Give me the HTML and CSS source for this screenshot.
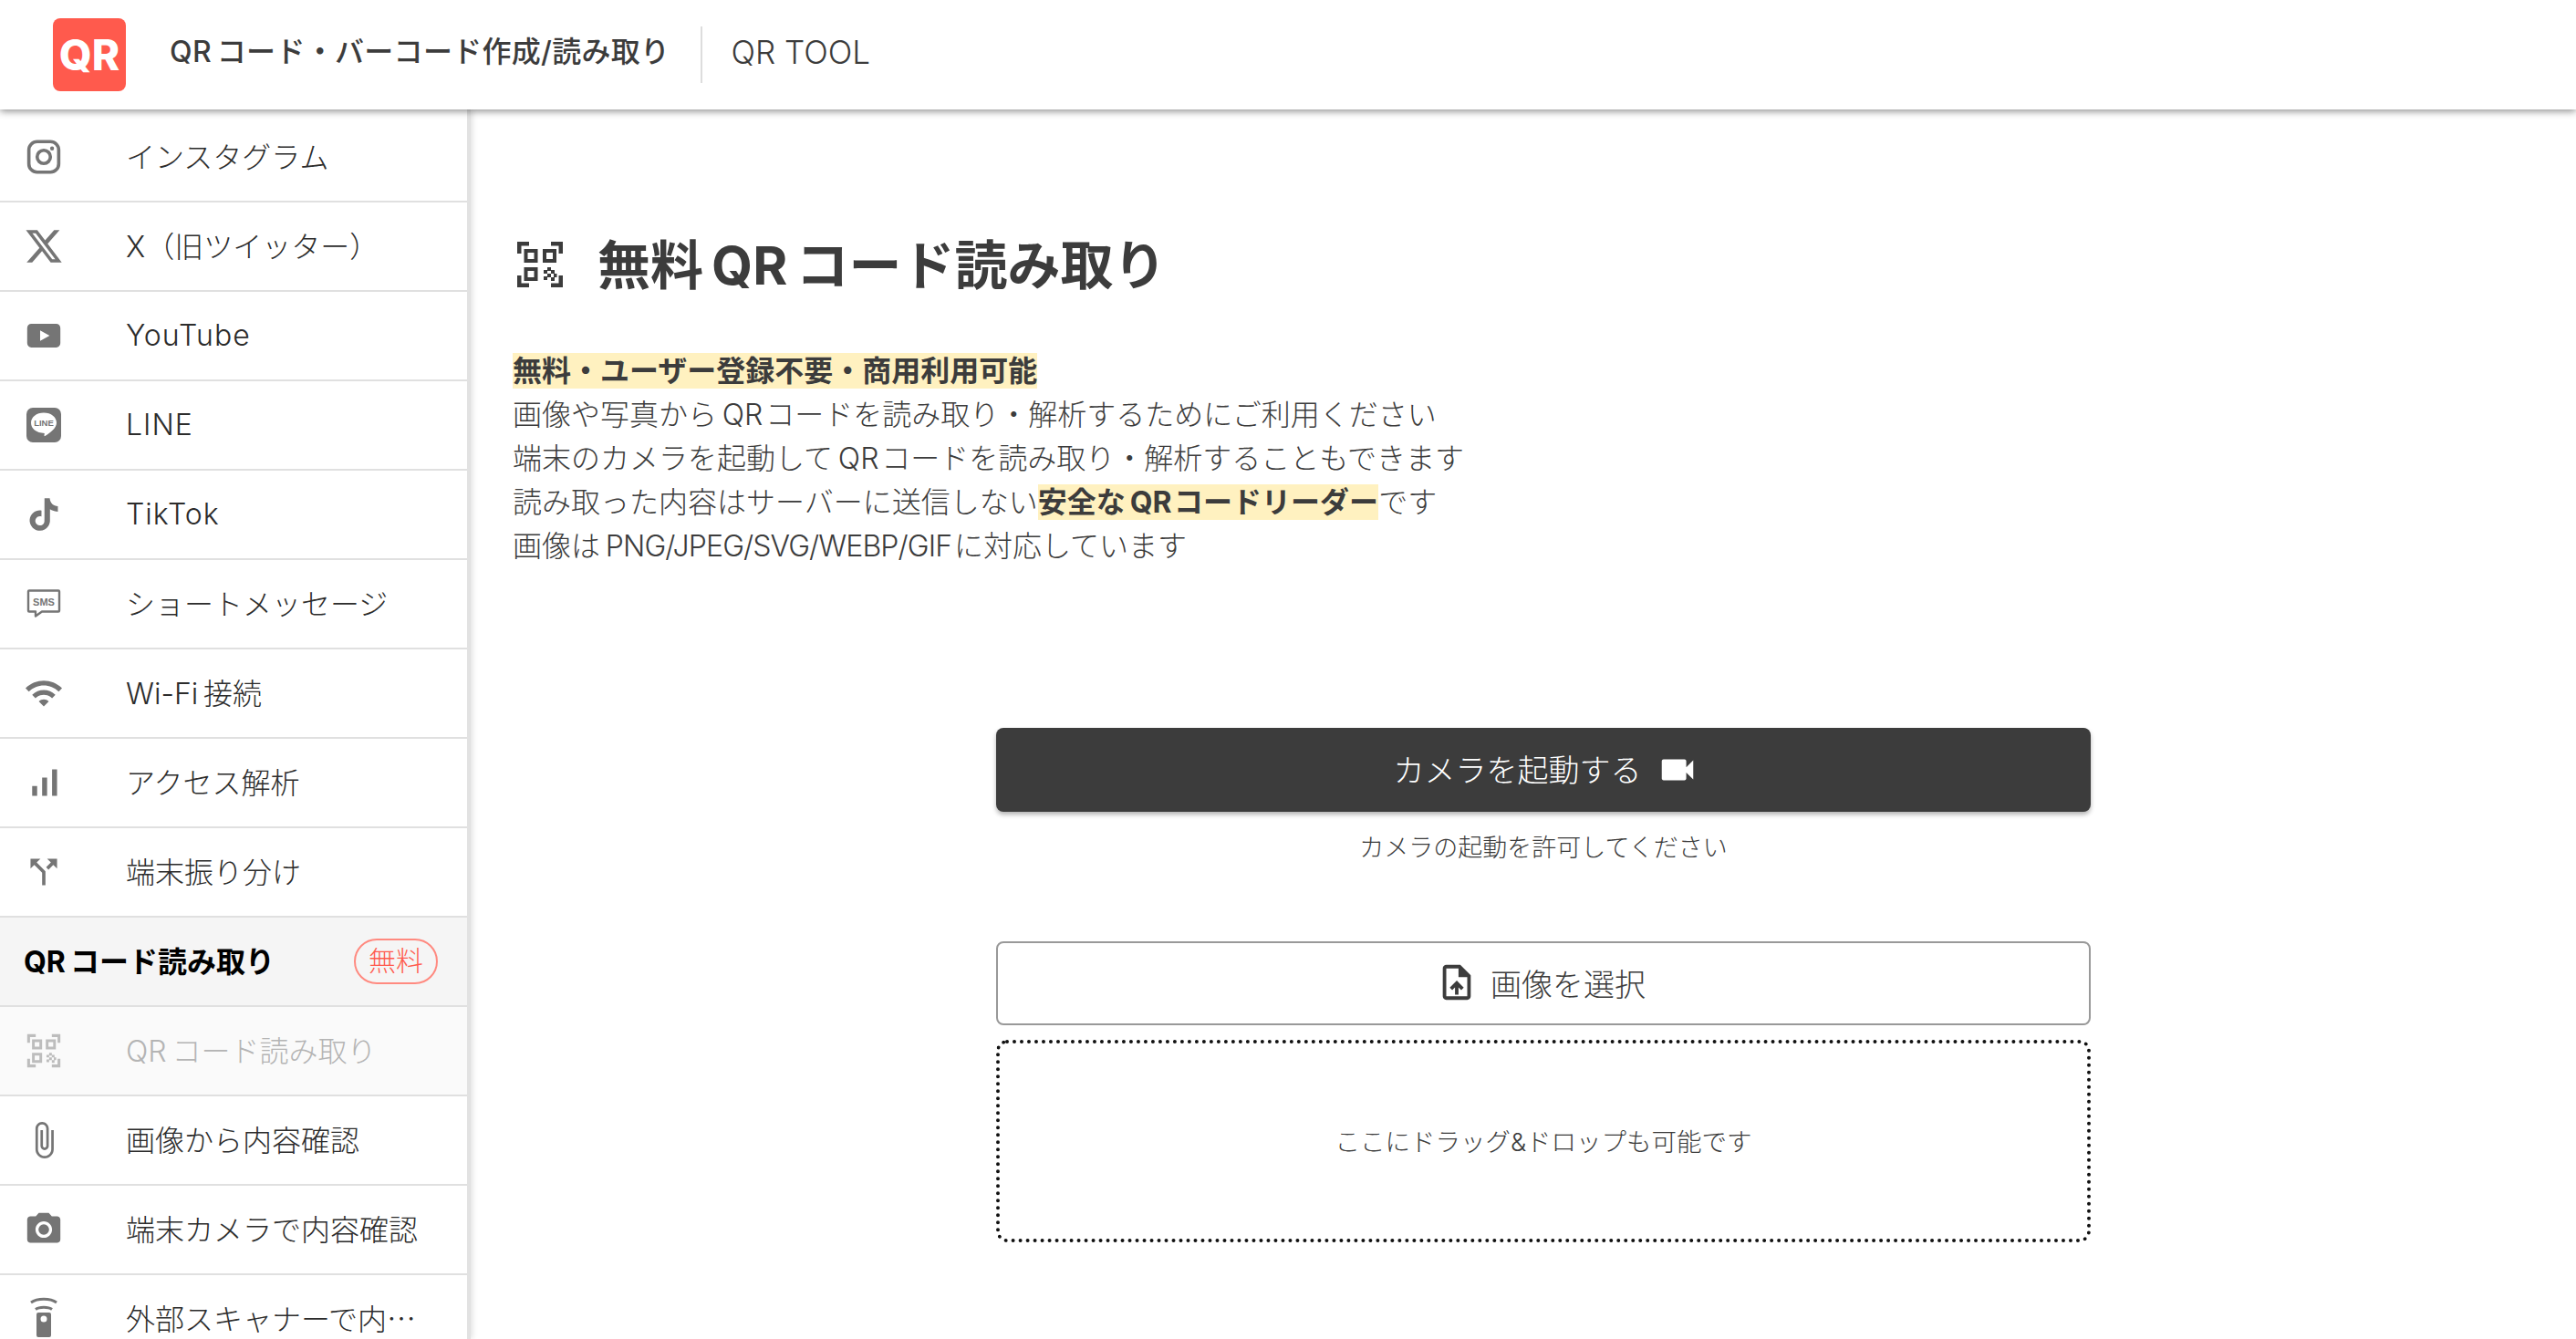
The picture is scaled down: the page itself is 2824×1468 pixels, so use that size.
FILE: index.html
```html
<!DOCTYPE html>
<html lang="ja">
<head>
  <meta charset="UTF-8" />
  <meta name="viewport" content="width=device-width, initial-scale=1.0" />
  <title>無料QRコード読み取り</title>
  <link rel="stylesheet" href="styles.css">
</head>
<body>
  <svg class="defs" width="0" height="0">
    <symbol id="i-qr" viewBox="0 0 50 50">
      <path d="M0 13V0h13v4.500H4.500V13zM37 0h13v13h-4.500V4.500H37zM0 37h4.500v8.500H13V50H0zM45.500 37H50v13H37v-4.500h8.500z"/>
      <path fill-rule="evenodd" d="M7.500 8h15v15h-15zm4 4v7h7v-7zM28 8h15v15H28zm4 4v7h7v-7zM7.500 28h15v15h-15zm4 4v7h7v-7z"/>
      <path d="M33 28h4v4h-4zM29 31h4v4h-4zM37 31h4v4h-4zM33 35h4v4h-4zM40 35h3.500v4H40zM29 38h4v4h-4zM37 39h4v4h-4z"/>
    </symbol>
    <symbol id="i-videocam" viewBox="0 0 24 24"><path d="M17 10.5V7c0-.55-.45-1-1-1H4c-.55 0-1 .45-1 1v10c0 .55.45 1 1 1h12c.55 0 1-.45 1-1v-3.5l4 4v-11l-4 4z"/></symbol>
    <symbol id="i-upload" viewBox="0 0 24 24"><path d="M14 2H6c-1.1 0-1.99.9-1.99 2L4 20c0 1.1.89 2 1.99 2H18c1.1 0 2-.9 2-2V8l-6-6zm4 18H6V4h7v5h5v11zM8 15.01l1.41 1.41L11 14.84V19h2v-4.16l1.59 1.59L16 15.01 12.01 11 8 15.01z"/></symbol>
  </svg>

  <header class="topbar">
    <div class="logo">QR</div>
    <div class="site-name">QR&#8201;コード・バーコード作成/読み取り</div>
    <div class="tool-name">QR TOOL</div>
  </header>

  <div class="layout">
    <aside class="sidebar">
      <a class="nav-row">
        <svg class="nav-icon" viewBox="1 1 22 22"><rect x="3" y="2.800" width="18" height="18.400" rx="5" fill="none" stroke="currentColor" stroke-width="2"/><circle cx="12" cy="12" r="4" fill="none" stroke="currentColor" stroke-width="2"/><circle cx="17" cy="6.900" r="1.200"/></svg>
        <span class="nav-label">インスタグラム</span>
      </a>
      <a class="nav-row">
        <svg class="nav-icon" viewBox="1 1 22 22"><path d="M18.244 2.25h3.308l-7.227 8.26 8.502 11.24H16.17l-5.214-6.817L4.99 21.75H1.68l7.73-8.835L1.254 2.25H8.08l4.713 6.231zm-1.161 17.52h1.833L7.084 4.126H5.117z"/></svg>
        <span class="nav-label">X（旧ツイッター）</span>
      </a>
      <a class="nav-row">
        <svg class="nav-icon" viewBox="1 1 22 22"><path fill-rule="evenodd" d="M4.5 4.9h15c1.4 0 2.5 1.1 2.5 2.5v9.200c0 1.400-1.100 2.500-2.500 2.500h-15C3.100 19.100 2 18 2 16.600V7.400c0-1.400 1.100-2.500 2.500-2.500zM9.800 8.800v6.400l5.700-3.200z"/></svg>
        <span class="nav-label nav-latin">YouTube</span>
      </a>
      <a class="nav-row">
        <svg class="nav-icon" viewBox="0 0 40 40"><rect x="1" y="1" width="38" height="38" rx="7"/><path fill="#fff" d="M20 6.500c8 0 14 4.900 14 11 0 5.500-6 10.500-12.600 14.500-.8.400-1 0-.9-.7l.3-2.300C11.500 28.500 6 23.800 6 17.500c0-6.100 6-11 14-11z"/><text class="icon-text" x="20" y="21" text-anchor="middle" font-size="9.500">LINE</text></svg>
        <span class="nav-label nav-latin">LINE</span>
      </a>
      <a class="nav-row">
        <svg class="nav-icon" viewBox="-1.500 -1.500 27 27"><path d="M12.525.02c1.31-.02 2.61-.01 3.91-.02.08 1.53.63 3.09 1.75 4.17 1.12 1.11 2.7 1.62 4.24 1.79v4.03c-1.44-.05-2.89-.35-4.2-.97-.57-.26-1.1-.59-1.62-.93-.01 2.92.01 5.84-.02 8.75-.08 1.4-.54 2.79-1.35 3.94-1.31 1.92-3.58 3.17-5.91 3.21-1.43.08-2.86-.31-4.08-1.03-2.02-1.19-3.44-3.37-3.65-5.71-.02-.5-.03-1-.01-1.49.18-1.9 1.12-3.72 2.58-4.96 1.66-1.44 3.98-2.13 6.15-1.72.02 1.48-.04 2.96-.04 4.44-.99-.32-2.15-.23-3.02.37-.63.41-1.11 1.04-1.36 1.75-.21.51-.15 1.07-.14 1.61.24 1.64 1.82 3.02 3.5 2.87 1.12-.01 2.19-.66 2.77-1.61.19-.33.4-.67.41-1.06.1-1.79.06-3.57.07-5.36.01-4.03-.01-8.05.02-12.07z"/></svg>
        <span class="nav-label nav-latin">TikTok</span>
      </a>
      <a class="nav-row">
        <svg class="nav-icon" viewBox="0 0 40 40"><path fill="none" stroke="currentColor" stroke-width="2.400" stroke-linejoin="round" d="M4 5.500h32a1 1 0 0 1 1 1v21a1 1 0 0 1-1 1H18l-7 5v-5H4a1 1 0 0 1-1-1v-21a1 1 0 0 1 1-1z"/><text class="icon-text" x="20" y="21.500" text-anchor="middle" font-size="11">SMS</text></svg>
        <span class="nav-label">ショートメッセージ</span>
      </a>
      <a class="nav-row">
        <svg class="nav-icon" viewBox="1 1 22 22"><path d="M1 9l2 2c4.970-4.970 13.030-4.970 18 0l2-2C16.930 2.930 7.080 2.930 1 9zm8 8l3 3 3-3c-1.650-1.660-4.340-1.660-6 0zm-4-4l2 2c2.760-2.760 7.240-2.760 10 0l2-2C15.140 9.140 8.870 9.140 5 13z"/></svg>
        <span class="nav-label">Wi-Fi&#8201;接続</span>
      </a>
      <a class="nav-row">
        <svg class="nav-icon" viewBox="1 1 22 22"><path d="M17 4h3v16h-3V4zM5 14h3v6H5v-6zm6-5h3v11h-3V9z"/></svg>
        <span class="nav-label">アクセス解析</span>
      </a>
      <a class="nav-row">
        <svg class="nav-icon" viewBox="1 1 22 22"><path d="M14 4l2.290 2.290-2.880 2.880 1.420 1.420 2.880-2.880L20 10V4h-6zm-4 0H4v6l2.290-2.290 4.710 4.700V20h2v-8.410l-5.290-5.300L10 4z"/></svg>
        <span class="nav-label">端末振り分け</span>
      </a>

      <div class="nav-row nav-head">
        <span class="nav-label">QR&#8201;コード読み取り</span>
        <span class="badge">無料</span>
      </div>
      <a class="nav-row nav-current">
        <svg class="nav-icon"><use href="#i-qr"/></svg>
        <span class="nav-label">QR&#8201;コード読み取り</span>
      </a>
      <a class="nav-row">
        <svg class="nav-icon" viewBox="1 1 22 22"><path d="M16.500 6v11.500c0 2.210-1.790 4-4 4s-4-1.790-4-4V5c0-1.380 1.120-2.500 2.500-2.500s2.500 1.120 2.500 2.500v10.500c0 .55-.45 1-1 1s-1-.45-1-1V6H10v9.500c0 1.380 1.120 2.500 2.500 2.500s2.500-1.120 2.500-2.500V5c0-2.210-1.790-4-4-4S7 2.790 7 5v12.500c0 3.040 2.460 5.500 5.500 5.500s5.500-2.460 5.500-5.500V6h-1.500z"/></svg>
        <span class="nav-label">画像から内容確認</span>
      </a>
      <a class="nav-row">
        <svg class="nav-icon" viewBox="1 1 22 22"><circle cx="12" cy="12" r="3.200"/><path d="M9 2L7.170 4H4c-1.100 0-2 .9-2 2v12c0 1.100.9 2 2 2h16c1.100 0 2-.9 2-2V6c0-1.100-.9-2-2-2h-3.170L15 2H9zm3 15c-2.760 0-5-2.240-5-5s2.240-5 5-5 5 2.240 5 5-2.240 5-5 5z"/></svg>
        <span class="nav-label">端末カメラで内容確認</span>
      </a>
      <a class="nav-row">
        <svg class="nav-icon" viewBox="0 0 40 40"><path fill="none" stroke="currentColor" stroke-width="3" d="M6 2C13-3 27-3 34 2M11 9.500C15 6.500 25 6.500 29 9.500"/><path fill-rule="evenodd" d="M14 13h12a2 2 0 0 1 2 2v23a2 2 0 0 1-2 2H14a2 2 0 0 1-2-2V15a2 2 0 0 1 2-2zm6 3.500a3.500 3.500 0 1 0 0 7 3.500 3.500 0 0 0 0-7z"/></svg>
        <span class="nav-label nav-long">外部スキャナーで内容確認</span>
      </a>
    </aside>

    <main class="content">
      <h1 class="page-title">
        <svg class="title-icon"><use href="#i-qr"/></svg>
        <span class="title-text">無料&#8201;QR&#8201;コード読み取り</span>
      </h1>
      <p class="intro">
        <strong class="mark">無料・ユーザー登録不要・商用利用可能</strong><br>
        画像や写真から&#8201;QR&#8202;コードを読み取り・解析するためにご利用ください<br>
        端末のカメラを起動して&#8201;QR&#8202;コードを読み取り・解析することもできます<br>
        読み取った内容はサーバーに送信しない<strong class="mark">安全な&#8201;QR&#8202;コードリーダー</strong>です<br>
        画像は&#8201;<span class="formats">PNG/JPEG/SVG/WEBP/GIF</span>&#8202;に対応しています
      </p>

      <div class="reader">
        <button class="btn btn-camera">カメラを起動する<svg class="btn-icon"><use href="#i-videocam"/></svg></button>
        <div class="note">カメラの起動を許可してください</div>
        <button class="btn btn-file"><svg class="btn-icon"><use href="#i-upload"/></svg>画像を選択</button>
        <div class="dropzone">ここにドラッグ&amp;ドロップも可能です</div>
      </div>
    </main>
  </div>
</body>
</html>
```

FILE: styles.css
```css
* {
  box-sizing: border-box;
}
html, body {
  height: 100%;
}
body {
  margin: 0;
  overflow: hidden;
  background-color: #fff;
  color: #3c3c3c;
  font-family: "Inter", "Noto Sans CJK JP", sans-serif;
  font-size: 32px;
}
.defs {
  position: absolute;
}

.topbar {
  position: relative;
  z-index: 2;
  height: 120px;
  display: flex;
  align-items: center;
  padding-left: 58px;
  background-color: #fff;
  box-shadow: 0 2px 8px rgba(0,0,0,0.45);
}
.logo {
  width: 80px;
  height: 80px;
  display: flex;
  align-items: center;
  justify-content: center;
  margin-right: 48px;
  background-color: #ff5a4d;
  border-radius: 8px;
  color: #fff;
  font-size: 46px;
  font-weight: 800;
}
.site-name {
  font-weight: 500;
  padding: 0 34px 6px 0;
  border-right: 2px solid #ddd;
  line-height: 56px;
  letter-spacing: 0.3px;
}
.tool-name {
  padding: 0 0 6px 31px;
  font-size: 35px;
  font-weight: 300;
}

.layout {
  display: flex;
  height: calc(100% - 120px);
}
.sidebar {
  flex: 0 0 512px;
  padding-top: 4px;
  overflow: hidden;
  box-shadow: 4px 0 0 #e2e2e2, 6px 0 6px rgba(0,0,0,0.12);
}
.nav-row {
  height: 98px;
  display: flex;
  align-items: center;
  border-bottom: 2px solid #e0e0e0;
  color: #2c2c2c;
  font-weight: 300;
}
.nav-icon {
  flex: 0 0 40px;
  width: 40px;
  height: 40px;
  margin: 0 70px 0 28px;
  overflow: visible;
  color: #757575;
  fill: currentColor;
}
.icon-text {
  font-family: "Liberation Sans", sans-serif;
  font-weight: 700;
  fill: currentColor;
}
.nav-label {
  flex: 1;
  min-width: 0;
  padding: 0 40px 4px 0;
  overflow: hidden;
  white-space: nowrap;
  text-overflow: ellipsis;
}
.nav-latin {
  padding-bottom: 2px;
  letter-spacing: 1px;
}
.nav-long {
  font-family: "Noto Sans CJK JP", sans-serif;
}
.nav-head {
  padding: 0 32px 0 26px;
  background-color: #f5f5f5;
  color: #000;
  font-weight: 700;
}
.nav-head .nav-label {
  padding-right: 0;
}
.badge {
  flex: none;
  width: 92px;
  height: 50px;
  line-height: 44px;
  text-align: center;
  border: 2px solid #ff8a80;
  border-radius: 25px;
  color: #ff5a4d;
  font-size: 30px;
  font-weight: 300;
}
.nav-current {
  background-color: #fafafa;
  color: #b4b4b4;
}
.nav-current .nav-icon {
  color: #bdbdbd;
  transform: scale(0.92);
}

.content {
  flex: 1;
  min-width: 0;
  padding: 130px 0 0 48px;
}
.page-title {
  display: flex;
  align-items: center;
  height: 80px;
  margin: 0;
  font-size: 58px;
  font-weight: 700;
}
.title-icon {
  width: 50px;
  height: 50px;
  margin: 0 38px 0 7px;
  fill: #3c3c3c;
}
.title-text {
  padding-bottom: 6px;
}
.intro {
  margin: 53px 0 0 2px;
  line-height: 48px;
  font-weight: 300;
}
.mark {
  font-weight: 700;
  background-color: #fff1c0;
}
.formats {
  letter-spacing: -0.9px;
}

.reader {
  width: 1200px;
  margin: 175px auto 0;
}
.btn {
  width: 100%;
  display: flex;
  align-items: center;
  justify-content: center;
  border-radius: 8px;
  font-family: inherit;
  font-size: 34px;
  font-weight: 300;
}
.btn-icon {
  width: 46px;
  height: 46px;
}
.btn-camera {
  height: 92px;
  padding: 0 0 4px 5px;
  border: none;
  background-color: #3c3c3c;
  color: #fff;
  box-shadow: 0 3px 5px rgba(0,0,0,0.3);
}
.btn-camera .btn-icon {
  margin: 4px 0 0 16px;
  fill: #fff;
}
.note {
  margin-top: 20px;
  line-height: 40px;
  text-align: center;
  font-size: 27px;
  font-weight: 300;
}
.btn-file {
  height: 92px;
  margin-top: 82px;
  padding: 0 6px 2px 0;
  border: 2px solid #999;
  background-color: #fff;
  color: #3c3c3c;
}
.btn-file .btn-icon {
  margin-right: 14px;
  fill: #3c3c3c;
}
.dropzone {
  height: 222px;
  margin-top: 16px;
  padding-bottom: 2px;
  display: flex;
  align-items: center;
  justify-content: center;
  border: 4px dotted #111;
  border-radius: 12px;
  font-size: 27.5px;
  font-weight: 300;
}
```
